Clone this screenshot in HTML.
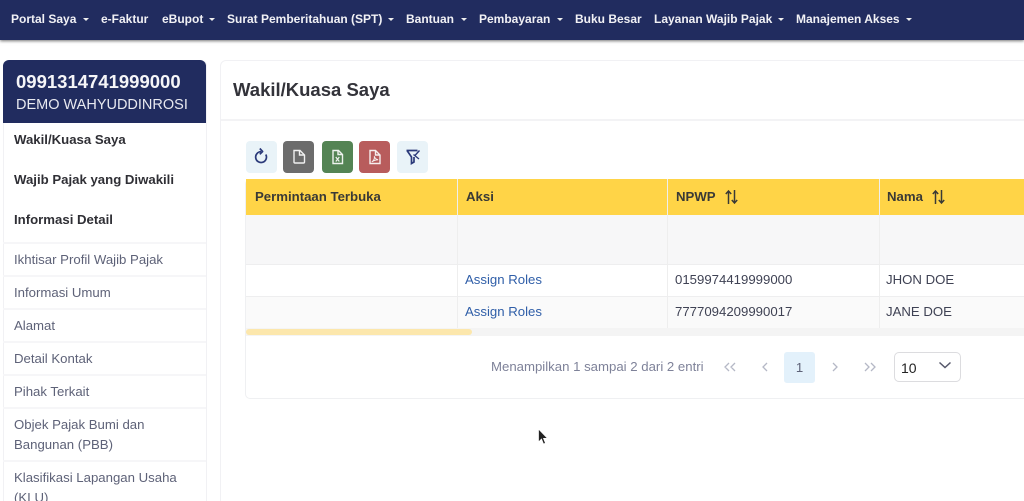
<!DOCTYPE html>
<html><head><meta charset="utf-8"><style>
html,body{margin:0;padding:0;width:1024px;height:501px;overflow:hidden;background:#fff;font-family:"Liberation Sans",sans-serif}
#w{position:relative;width:1024px;height:501px;overflow:hidden;background:#fff}
.a{position:absolute;white-space:nowrap}
#nav{left:0;top:0;width:1024px;height:40px;background:#212c5f;box-shadow:0 1px 3px rgba(0,0,0,.55)}
.n{top:12px;font-size:12px;font-weight:700;color:#f1f1f5;line-height:14px}
.c{top:17.500px;width:0;height:0;border-left:3px solid transparent;border-right:3px solid transparent;border-top:3px solid #eee}
.s{left:14px;font-size:13.200px;color:#5e6278;line-height:20px}
.sb{left:14px;font-size:13.200px;font-weight:700;color:#2f2f35;line-height:20px}
.hl{left:3px;width:203px;height:2px;background:#f6f6f8}
.th{top:189px;font-size:13.200px;font-weight:700;color:#3a3a36;line-height:16px}
.v{width:1px;background:#eeeeee}
.td{font-size:13.200px;color:#3f4254;line-height:16px}
.lnk{font-size:13.200px;color:#2f5ea8;line-height:16px}
.b{top:141px;width:31px;height:32px;border-radius:4px}
</style></head><body><div id="w">
<div class="a" id="nav"></div>
<div class="a n" style="left:11px">Portal Saya</div><div class="a c" style="left:82.500px"></div>
<div class="a n" style="left:101px">e-Faktur</div>
<div class="a n" style="left:162px">eBupot</div><div class="a c" style="left:208.500px"></div>
<div class="a n" style="left:227px">Surat Pemberitahuan (SPT)</div><div class="a c" style="left:387.500px"></div>
<div class="a n" style="left:406px">Bantuan</div><div class="a c" style="left:460.500px"></div>
<div class="a n" style="left:479px">Pembayaran</div><div class="a c" style="left:556.500px"></div>
<div class="a n" style="left:575px">Buku Besar</div>
<div class="a n" style="left:654px">Layanan Wajib Pajak</div><div class="a c" style="left:777.500px"></div>
<div class="a n" style="left:796px">Manajemen Akses</div><div class="a c" style="left:905.500px"></div>

<!-- sidebar -->
<div class="a" style="left:3px;top:60px;width:202px;height:460px;border:1px solid #f1f1f4;border-top:0;border-radius:6px 6px 0 0"></div>
<div class="a" style="left:3px;top:60px;width:203px;height:63px;background:#212c5f;border-radius:6px 6px 0 0"></div>
<div class="a" style="left:16px;top:71px;font-size:18.500px;font-weight:700;color:#f5f5f8;line-height:21px">0991314741999000</div>
<div class="a" style="left:16px;top:96px;font-size:14.500px;color:#e8e9f0;line-height:18px">DEMO WAHYUDDINROSI</div>
<div class="a sb" style="top:130px">Wakil/Kuasa Saya</div>
<div class="a sb" style="top:170px">Wajib Pajak yang Diwakili</div>
<div class="a sb" style="top:210px">Informasi Detail</div>
<div class="a hl" style="top:242px"></div>
<div class="a s" style="top:250px">Ikhtisar Profil Wajib Pajak</div>
<div class="a hl" style="top:275px"></div>
<div class="a s" style="top:283px">Informasi Umum</div>
<div class="a hl" style="top:308px"></div>
<div class="a s" style="top:316px">Alamat</div>
<div class="a hl" style="top:341px"></div>
<div class="a s" style="top:349px">Detail Kontak</div>
<div class="a hl" style="top:374px"></div>
<div class="a s" style="top:382px">Pihak Terkait</div>
<div class="a hl" style="top:407px"></div>
<div class="a s" style="top:415px">Objek Pajak Bumi dan</div>
<div class="a s" style="top:435px">Bangunan (PBB)</div>
<div class="a hl" style="top:460px"></div>
<div class="a s" style="top:468px">Klasifikasi Lapangan Usaha</div>
<div class="a s" style="top:488px">(KLU)</div>

<!-- main card -->
<div class="a" style="left:220px;top:60px;width:820px;height:460px;border:1px solid #f1f1f4;border-radius:6px;box-sizing:border-box"></div>
<div class="a" style="left:221px;top:119px;width:803px;height:2px;background:#f3f3f5"></div>
<div class="a" style="left:233px;top:79px;font-size:18.500px;font-weight:700;color:#33333a;line-height:22px">Wakil/Kuasa Saya</div>

<!-- inner card -->
<div class="a" style="left:245px;top:179px;width:800px;height:220px;border:1px solid #eff0f2;border-radius:5px;box-sizing:border-box"></div>

<!-- buttons -->
<div class="a b" style="left:246px;background:#e9f3f8"><svg width="31" height="32" viewBox="0 0 31 32" fill="none" stroke="#2b3a7a" stroke-width="1.700"><path d="M15 10.700a5.400 5.400 0 1 0 4.800 2.800"/><path d="M13.800 7.500l2.800 3-2.800 2.800" stroke-linejoin="round"/></svg></div>
<div class="a b" style="left:283px;background:#6c6c6c"><svg width="31" height="32" viewBox="0 0 31 32" fill="none" stroke="#f0f0f0" stroke-width="1.400"><path d="M11 9.500h6l4.500 4.500v7a1 1 0 0 1-1 1h-8.500a1 1 0 0 1-1-1z"/><path d="M16.500 9.500v4.500h5"/></svg></div>
<div class="a b" style="left:322px;background:#548454"><svg width="31" height="32" viewBox="0 0 31 32" fill="none" stroke="#eef2ee" stroke-width="1.400"><path d="M11 9.500h5.500l4 4v9h-9.500z"/><path d="M16 9.500v4h4.500"/><path d="M13.800 16l3.500 4.500M17.300 16l-3.500 4.500" stroke-width="1.200"/></svg></div>
<div class="a b" style="left:359px;background:#b85c5c"><svg width="31" height="32" viewBox="0 0 31 32" fill="none" stroke="#f6eeee" stroke-width="1.400"><path d="M11 9.500h5.500l4.500 4.500v8.500h-10z"/><path d="M16.500 9.500v4.500h4.500"/><path d="M12.800 20.800c2-1 3-3.500 2.500-5.500 .8 2 1.500 3 3.800 3.500-2 0-4.300 .8-6.300 2z" stroke-width="1"/></svg></div>
<div class="a b" style="left:397px;background:#e9f3f8"><svg width="31" height="32" viewBox="0 0 31 32" fill="none" stroke="#2b3a7a" stroke-width="1.700"><path d="M9.500 9.500h11M10 9.500l4.500 6.500v6.500l2.500-1.500v-5"/><path d="M16.500 13.500l5.500 4.500M22.500 9.500l-5 5.500" stroke-width="1.400"/></svg></div>

<!-- table head -->
<div class="a" style="left:246px;top:179px;width:778px;height:36px;background:#ffd447"></div>
<div class="a th" style="left:255px">Permintaan Terbuka</div>
<div class="a th" style="left:466px">Aksi</div>
<div class="a th" style="left:676px">NPWP</div>
<svg class="a" style="left:724px;top:189px" width="16" height="16" viewBox="0 0 16 16" fill="none" stroke="#3a3a36" stroke-width="1.500"><path d="M4.500 15V2M1.800 5l2.700-3 2.700 3M10.500 1v13M7.800 11l2.700 3 2.700-3"/></svg>
<div class="a th" style="left:887px">Nama</div>
<svg class="a" style="left:931px;top:189px" width="16" height="16" viewBox="0 0 16 16" fill="none" stroke="#3a3a36" stroke-width="1.500"><path d="M4.500 15V2M1.800 5l2.700-3 2.700 3M10.500 1v13M7.800 11l2.700 3 2.700-3"/></svg>

<!-- rows -->
<div class="a" style="left:246px;top:215px;width:778px;height:49px;background:#f7f7f8"></div>
<div class="a" style="left:246px;top:264px;width:778px;height:1px;background:#eeeeef"></div>
<div class="a" style="left:246px;top:296px;width:778px;height:1px;background:#eeeeef"></div>
<div class="a" style="left:246px;top:297px;width:778px;height:31px;background:#fafafa"></div>
<div class="a" style="left:246px;top:328px;width:778px;height:8px;background:#f4f4f4"></div>
<div class="a" style="left:246px;top:329px;width:226px;height:6px;background:#fce7ac;border-radius:3px"></div>
<div class="a v" style="left:457px;top:179px;height:149px"></div>
<div class="a v" style="left:667px;top:179px;height:149px"></div>
<div class="a v" style="left:879px;top:179px;height:149px"></div>
<div class="a lnk" style="left:465px;top:272px">Assign Roles</div>
<div class="a td" style="left:675px;top:272px">0159974419999000</div>
<div class="a td" style="left:886px;top:272px">JHON DOE</div>
<div class="a lnk" style="left:465px;top:304px">Assign Roles</div>
<div class="a td" style="left:675px;top:304px">7777094209990017</div>
<div class="a td" style="left:886px;top:304px">JANE DOE</div>

<!-- pagination -->
<div class="a" style="left:491px;top:359px;font-size:13.200px;color:#7e8299;line-height:16px">Menampilkan 1 sampai 2 dari 2 entri</div>
<svg class="a" style="left:720px;top:358px" width="160" height="18" viewBox="0 0 160 18" fill="none" stroke="#b5b8c6" stroke-width="1.300"><path d="M9 5L5 9l4 4M15 5l-4 4 4 4M47 5l-4 4 4 4M113 5l4 4-4 4M145 5l4 4-4 4M151 5l4 4-4 4"/></svg>
<div class="a" style="left:784px;top:352px;width:31px;height:31px;background:#e3f1fb;border-radius:3px;text-align:center;font-size:13.200px;line-height:31px;color:#5e6278">1</div>
<div class="a" style="left:894px;top:352px;width:67px;height:30px;border:1px solid #dcdcdf;border-radius:5px;box-sizing:border-box"></div>
<div class="a" style="left:901px;top:360px;font-size:14px;color:#222;line-height:17px">10</div>
<svg class="a" style="left:937px;top:360px" width="16" height="12" viewBox="0 0 16 12" fill="none" stroke="#55576a" stroke-width="1.500"><path d="M2.500 2.500L8 7.500l5.500-5"/></svg>

<!-- cursor -->
<svg class="a" style="left:537px;top:428px" width="12" height="18" viewBox="0 0 12 18"><path d="M1.500 1v13l3-3 2 5 2-.8-2-4.800h4z" fill="#222" stroke="#fff" stroke-width=".7"/></svg>
</div></body></html>
